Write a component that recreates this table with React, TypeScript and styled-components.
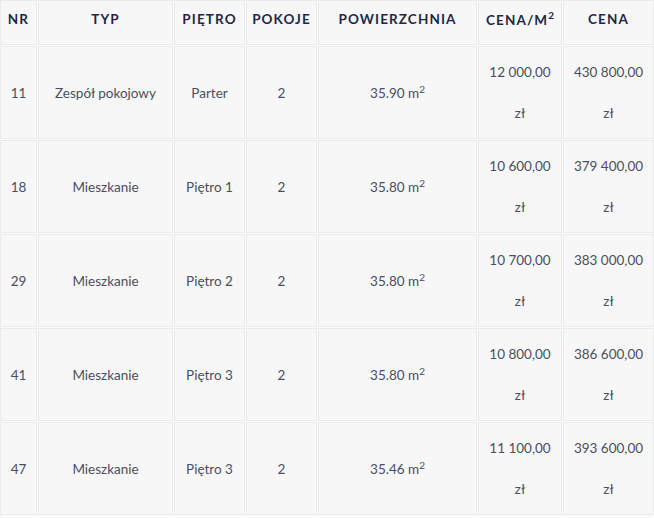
import React from "react";
import styled, { createGlobalStyle } from "styled-components";

const Global = createGlobalStyle`
  html, body { margin: 0; padding: 0; background: #fbfbfb; }
  body { font-family: Lato, "Open Sans", Arial, sans-serif; }
`;

const Table = styled.table`
  border-collapse: separate;
  border-spacing: 1px;
  table-layout: fixed;
  width: 656px;
  margin: -1px 0 0 -1px;
  background: #fbfbfb;
`;

const Th = styled.th`
  height: 35px;
  padding: 0 2px 8px;
  vertical-align: middle;
  background: #f7f7f7;
  border: 1px solid #ebebeb;
  color: #1f2747;
  font-size: 13.5px;
  font-weight: 700;
  letter-spacing: 1.1px;
  text-transform: uppercase;
  text-align: center;
  white-space: nowrap;
  sup { font-size: 10px; letter-spacing: 0; }
`;

const Td = styled.td`
  height: 91px;
  padding: 0 4px;
  background: #f7f7f7;
  border: 1px solid #ebebeb;
  color: #4a4f5f;
  font-size: 13.5px;
  text-align: center;
  vertical-align: middle;
  line-height: 20px;
  sup { font-size: 10px; line-height: 0; }
`;

const Price = styled.div`
  line-height: 41px;
`;

type Row = { nr: number; typ: string; pietro: string; pokoje: number; pow: string; cenaM: string; cena: string };

const rows: Row[] = [
  { nr: 11, typ: "Zespół pokojowy", pietro: "Parter", pokoje: 2, pow: "35.90", cenaM: "12 000,00", cena: "430 800,00" },
  { nr: 18, typ: "Mieszkanie", pietro: "Piętro 1", pokoje: 2, pow: "35.80", cenaM: "10 600,00", cena: "379 400,00" },
  { nr: 29, typ: "Mieszkanie", pietro: "Piętro 2", pokoje: 2, pow: "35.80", cenaM: "10 700,00", cena: "383 000,00" },
  { nr: 41, typ: "Mieszkanie", pietro: "Piętro 3", pokoje: 2, pow: "35.80", cenaM: "10 800,00", cena: "386 600,00" },
  { nr: 47, typ: "Mieszkanie", pietro: "Piętro 3", pokoje: 2, pow: "35.46", cenaM: "11 100,00", cena: "393 600,00" },
];

export default function App() {
  return (
    <>
      <Global />
      <Table>
        <colgroup>
          <col style={{ width: 37 }} />
          <col style={{ width: 135 }} />
          <col style={{ width: 71 }} />
          <col style={{ width: 71 }} />
          <col style={{ width: 159 }} />
          <col style={{ width: 84 }} />
          <col style={{ width: 91 }} />
        </colgroup>
        <thead>
          <tr>
            <Th>Nr</Th>
            <Th>Typ</Th>
            <Th>Piętro</Th>
            <Th>Pokoje</Th>
            <Th>Powierzchnia</Th>
            <Th>
              Cena/m<sup>2</sup>
            </Th>
            <Th>Cena</Th>
          </tr>
        </thead>
        <tbody>
          {rows.map((r) => (
            <tr key={r.nr}>
              <Td>{r.nr}</Td>
              <Td>{r.typ}</Td>
              <Td>{r.pietro}</Td>
              <Td>{r.pokoje}</Td>
              <Td>
                {r.pow} m<sup>2</sup>
              </Td>
              <Td>
                <Price>
                  {r.cenaM}
                  <br />
                  zł
                </Price>
              </Td>
              <Td>
                <Price>
                  {r.cena}
                  <br />
                  zł
                </Price>
              </Td>
            </tr>
          ))}
        </tbody>
      </Table>
    </>
  );
}
